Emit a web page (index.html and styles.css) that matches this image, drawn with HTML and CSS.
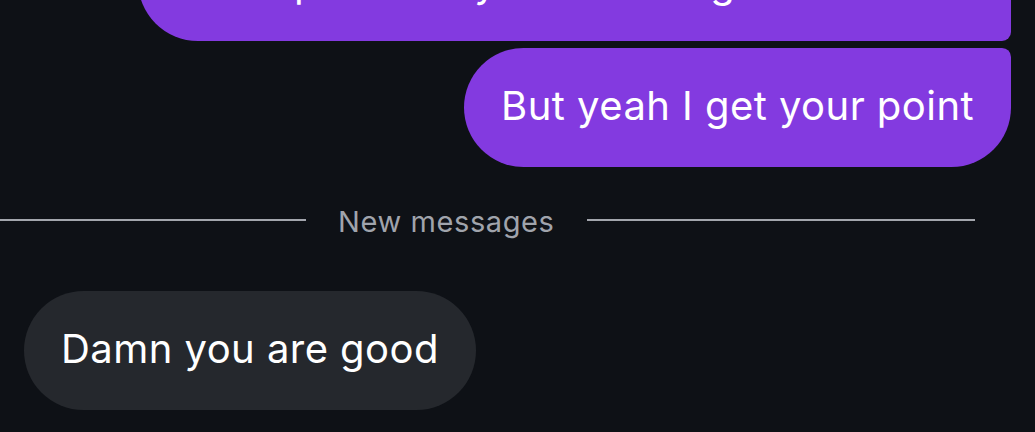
FILE: index.html
```html
<!DOCTYPE html>
<html lang="en">
<head>
<meta charset="utf-8">
<title>Chat</title>
<link rel="stylesheet" href="styles.css">
</head>
<body>
<main class="chat">
  <div class="bubble out mid wide">Honestly it depends on what kind of player<br>those peers only watch the game.</div>
  <div class="bubble out last">But yeah I get your point</div>
  <div class="divider">
    <span class="line line-left"></span>
    <span class="divider-label">New messages</span>
    <span class="line line-right"></span>
  </div>
  <div class="bubble in">Damn you are good</div>
</main>
</body>
</html>
```

FILE: styles.css
```css
* { box-sizing: border-box; }

html, body {
  margin: 0;
  height: 100%;
  background: #0e1116;
  overflow: hidden;
}

body {
  font-family: Inter, "Noto Sans", "Liberation Sans", sans-serif;
  color: #ffffff;
}

.chat {
  display: flex;
  flex-direction: column;
  padding: 0 24px;
}

.bubble {
  font-size: 40px;
  line-height: 48px;
  letter-spacing: 0.45px;
  padding: 34px 37px 37px;
  border-radius: 60px;
  white-space: nowrap;
}

.out {
  align-self: flex-end;
  background: #833ae0;
}

.mid {
  border-radius: 60px 9px 9px 60px;
}

.last {
  border-radius: 60px 9px 60px 60px;
  margin-top: 7px;
}

.wide {
  width: 873px;
  margin-top: -123px;
  padding-bottom: 34px;
}

.in {
  align-self: flex-start;
  background: #25282d;
  margin-top: 51px;
}

.divider {
  display: flex;
  align-items: center;
  height: 40px;
  margin: 33px -24px 0;
  padding-right: 60px;
}

.line {
  height: 2px;
  background: #a3a6ad;
}

.line-left { flex: 0 0 306px; }
.line-right { flex: 1 1 auto; }

.divider-label {
  margin: 3px 32px 0;
  font-size: 29px;
  letter-spacing: 0.6px;
  color: #a0a4ac;
  white-space: nowrap;
}
```
